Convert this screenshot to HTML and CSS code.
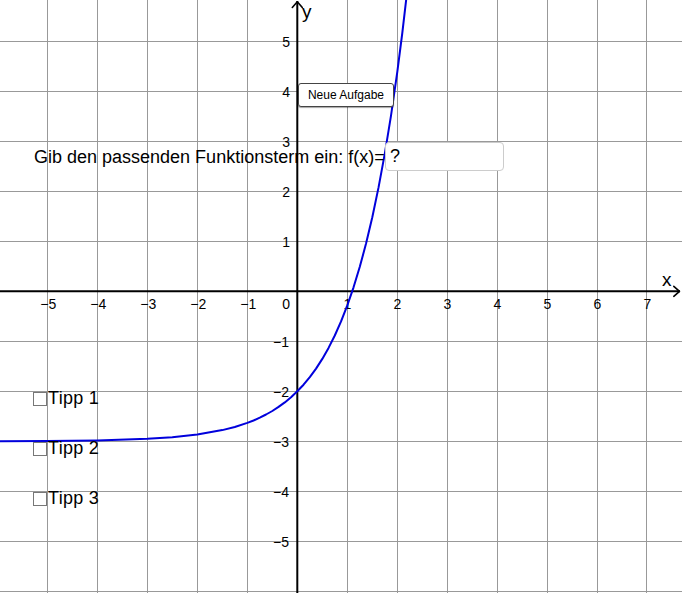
FILE: index.html
```html
<!DOCTYPE html>
<html lang="de">
<head>
<meta charset="utf-8">
<title>Funktionsterm</title>
<link rel="stylesheet" href="styles.css">
</head>
<body>
<div class="stage">
  <svg class="graph" width="682" height="593" viewBox="0 0 682 593" xmlns="http://www.w3.org/2000/svg">
    <g class="grid">
      <line x1="47.5" y1="0" x2="47.5" y2="593"/>
      <line x1="97.5" y1="0" x2="97.5" y2="593"/>
      <line x1="147.5" y1="0" x2="147.5" y2="593"/>
      <line x1="197.5" y1="0" x2="197.5" y2="593"/>
      <line x1="247.5" y1="0" x2="247.5" y2="593"/>
      <line x1="347.5" y1="0" x2="347.5" y2="593"/>
      <line x1="397.5" y1="0" x2="397.5" y2="593"/>
      <line x1="447.5" y1="0" x2="447.5" y2="593"/>
      <line x1="497.5" y1="0" x2="497.5" y2="593"/>
      <line x1="547.5" y1="0" x2="547.5" y2="593"/>
      <line x1="597.5" y1="0" x2="597.5" y2="593"/>
      <line x1="646.5" y1="0" x2="646.5" y2="593"/>
      <line x1="0" y1="41.5" x2="682" y2="41.5"/>
      <line x1="0" y1="91.5" x2="682" y2="91.5"/>
      <line x1="0" y1="141.5" x2="682" y2="141.5"/>
      <line x1="0" y1="191.5" x2="682" y2="191.5"/>
      <line x1="0" y1="241.5" x2="682" y2="241.5"/>
      <line x1="0" y1="341.5" x2="682" y2="341.5"/>
      <line x1="0" y1="391.5" x2="682" y2="391.5"/>
      <line x1="0" y1="441.5" x2="682" y2="441.5"/>
      <line x1="0" y1="491.5" x2="682" y2="491.5"/>
      <line x1="0" y1="541.5" x2="682" y2="541.5"/>
      <line x1="0" y1="591.5" x2="682" y2="591.5"/>
    </g>
    <g class="axes">
      <line x1="297.3" y1="1" x2="297.3" y2="593"/>
      <line x1="0" y1="291.3" x2="680" y2="291.3"/>
      <polyline points="292.3,7.5 297.3,1.8 302.3,7.5"/>
      <polyline points="673.8,286.3 679.5,291.3 673.8,296.3"/>
    </g>
    <g class="axis-name">
      <text x="302" y="18">y</text>
      <text x="662" y="286">x</text>
    </g>
    <g class="xlabels">
      <text x="48.3" y="309">−5</text>
      <text x="98.3" y="309">−4</text>
      <text x="148.3" y="309">−3</text>
      <text x="198.3" y="309">−2</text>
      <text x="248.3" y="309">−1</text>
      <text x="347.3" y="309">1</text>
      <text x="397.3" y="309">2</text>
      <text x="447.3" y="309">3</text>
      <text x="497.3" y="309">4</text>
      <text x="547.3" y="309">5</text>
      <text x="597.3" y="309">6</text>
      <text x="647.3" y="309">7</text>
    </g>
    <g class="ylabels">
      <text x="290" y="309">0</text>
      <text x="290" y="46.5">5</text>
      <text x="290" y="96.5">4</text>
      <text x="290" y="146.5">3</text>
      <text x="290" y="196.5">2</text>
      <text x="290" y="246.5">1</text>
      <text x="289" y="346.5">−1</text>
      <text x="289" y="396.5">−2</text>
      <text x="289" y="446.5">−3</text>
      <text x="289" y="496.5">−4</text>
      <text x="289" y="546.5">−5</text>
    </g>
    <polyline class="curve" points="-2.7,441.2 47.3,441.0 97.3,440.4 147.3,438.8 172.3,437.2 197.3,434.5 222.3,430.1 234.8,427.0 247.3,422.9 253.55,420.5 259.8,417.7 266.05,414.5 272.3,411.0 278.55,406.9 284.8,402.4 291.05,397.2 297.3,391.3 303.55,384.7 309.8,377.1 316.05,368.6 322.3,358.9 328.55,347.9 334.8,335.5 341.05,321.4 347.3,305.4 353.55,287.3 359.8,266.8 366.05,243.6 372.3,217.2 378.55,187.4 384.8,153.6 391.05,115.3 397.3,71.9 402.3,33.0 407.3,-10"/>
  </svg>

  <button class="new-task" type="button">Neue Aufgabe</button>

  <div class="prompt">Gib den passenden Funktionsterm ein: f(x)=</div>
  <div class="answer">?</div>

  <div class="tips">
    <label class="tip"><span class="box"></span>Tipp 1</label>
    <label class="tip"><span class="box"></span>Tipp 2</label>
    <label class="tip"><span class="box"></span>Tipp 3</label>
  </div>
</div>
</body>
</html>
```

FILE: styles.css
```css
html, body {
  margin: 0;
  padding: 0;
  background: #ffffff;
}

body {
  font-family: "Liberation Sans", Arial, sans-serif;
  color: #000000;
}

.stage {
  position: relative;
  width: 682px;
  height: 593px;
  overflow: hidden;
}

.graph {
  display: block;
}

.grid line {
  stroke: #999999;
  stroke-width: 1;
}

.axes line,
.axes polyline {
  stroke: #000000;
  stroke-width: 2;
  fill: none;
}

.axes polyline {
  stroke-width: 1.6;
  stroke-linecap: round;
  stroke-linejoin: round;
}

.axis-name text {
  font-family: "Liberation Sans", Arial, sans-serif;
  font-size: 19px;
  fill: #000000;
}

.xlabels text {
  font-family: "Liberation Sans", Arial, sans-serif;
  font-size: 14px;
  text-anchor: middle;
  fill: #000000;
}

.ylabels text {
  font-family: "Liberation Sans", Arial, sans-serif;
  font-size: 14px;
  text-anchor: end;
  fill: #000000;
}

.curve {
  fill: none;
  stroke: #0000dc;
  stroke-width: 2;
  stroke-linejoin: round;
}

.new-task {
  position: absolute;
  left: 298px;
  top: 83px;
  width: 96px;
  height: 24px;
  margin: 0;
  padding: 0;
  background: #ffffff;
  border: 1px solid #444444;
  border-radius: 3px;
  box-shadow: 0 1px 1px rgba(0, 0, 0, 0.35);
  font-family: "Liberation Sans", Arial, sans-serif;
  font-size: 12px;
  color: #000000;
  line-height: 22px;
}

.prompt {
  position: absolute;
  left: 34px;
  top: 146px;
  font-size: 18px;
  line-height: 22px;
  white-space: nowrap;
}

.answer {
  position: absolute;
  left: 385px;
  top: 142px;
  width: 113px;
  height: 27px;
  padding-left: 4px;
  border: 1px solid #cccccc;
  border-radius: 4px;
  background: #ffffff;
  font-size: 18px;
  line-height: 27px;
}

.tips {
  position: absolute;
  left: 33px;
  top: 388px;
  display: flex;
  flex-direction: column;
  gap: 29px;
}

.tip {
  display: flex;
  align-items: center;
  height: 21px;
  font-size: 18px;
  line-height: 21px;
  letter-spacing: 0.3px;
}

.box {
  box-sizing: border-box;
  width: 14px;
  height: 14px;
  margin-right: 1px;
  border: 1px solid #777777;
  background: #ffffff;
}
```
